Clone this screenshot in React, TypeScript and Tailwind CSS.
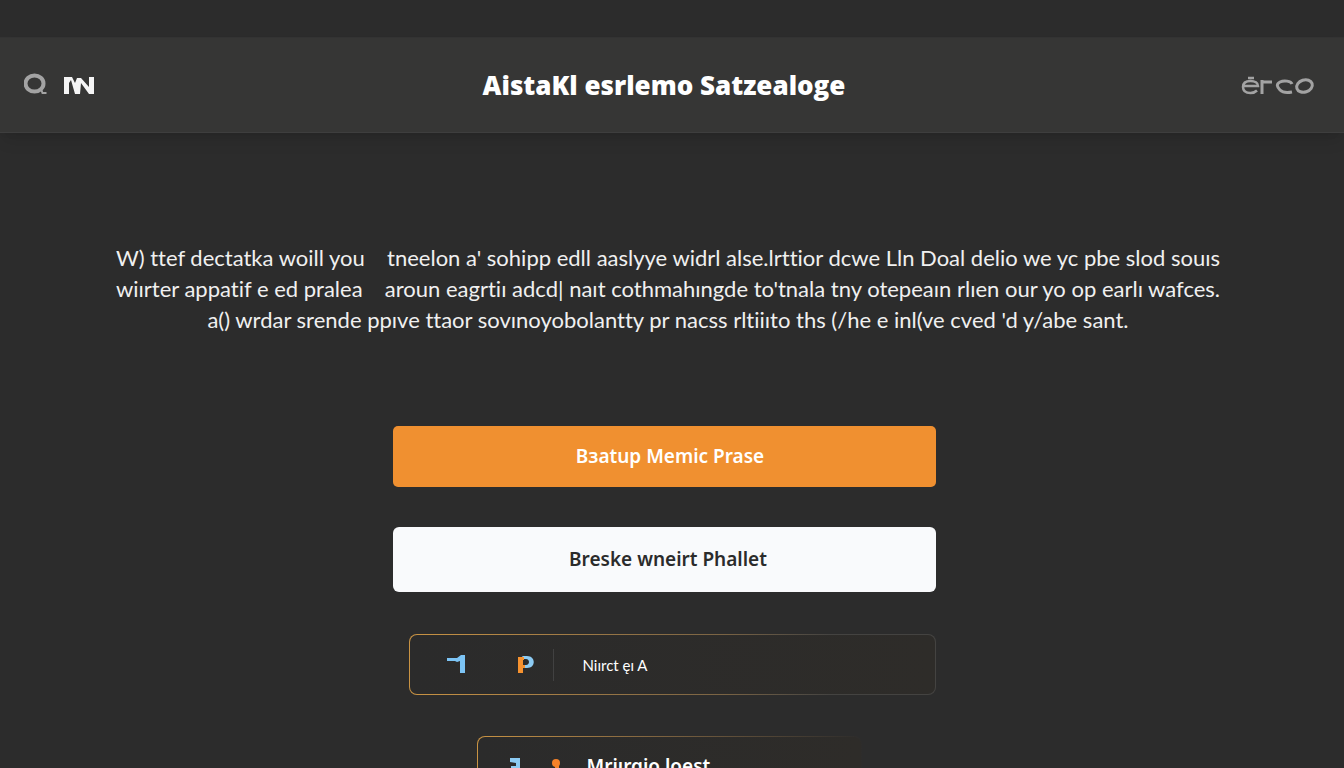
import type { ReactNode } from 'react'
import { clsx } from 'clsx'

const introLines = [
  "W) ttef dectatka woill you \u2002 tneelon a' sohipp edll aaslyye widrl alse.lrttior dcwe Lln Doal delio we yc pbe slod souıs",
  "wiırter appatif e ed pralea \u2002 aroun eagrtiı adcd| naıt cothmahıngde to'tnala tny otepeaın rlıen our yo op earlı wafces.",
  "a() wrdar srende ppıve ttaor sovınoyobolantty pr nacss rltiiıto ths (/he e inl(ve cved 'd y/abe sant.",
]

function SearchIcon() {
  return (
    <svg width="24" height="24" viewBox="0 0 24 24" fill="none" aria-hidden="true">
      <ellipse cx="10.500" cy="10.500" rx="9" ry="8" stroke="#a3a3a3" strokeWidth="4" />
      <path d="M17 16 18.500 20h4" stroke="#a3a3a3" strokeWidth="2" />
    </svg>
  )
}

function BrandMark() {
  return (
    <svg width="30" height="18" viewBox="0 0 30 18" fill="#f5f5f5" aria-hidden="true">
      <path d="M0 1h8l3 6 2-5h4l8 9V1h5v17h-5L17 7l-1 11h-5L7 4 5 7v11H0z" />
    </svg>
  )
}

function WordMark() {
  return (
    <svg width="74" height="20" viewBox="0 0 74 20" fill="none" stroke="#a3a3a3" strokeWidth="3" aria-hidden="true">
      <path d="M2 11h15c0-3-3-5-7.500-5S2 8 2 12s3 6 7.500 6c3 0 5-1 6.500-2.500M7 3h6" strokeWidth="2.500" />
      <path d="M21 19V5M22 7h9" />
      <path d="M51 9c-1-3-8-4-12-2-4 2-3 5 0 8 2 2 7 3 12 2" />
      <ellipse cx="63.500" cy="11" rx="8" ry="6" transform="rotate(-18 63.500 11)" />
    </svg>
  )
}

function SevenIcon() {
  return (
    <svg width="19" height="19" viewBox="0 0 19 19" fill="#7cc4f5" aria-hidden="true">
      <path d="M0 3h10l4-3h4v18h-5V6l-3 1-2-1H0z" />
    </svg>
  )
}

function ParkIcon() {
  return (
    <svg width="16" height="18" viewBox="0 0 16 18" aria-hidden="true">
      <path d="M4 0h5c9 0 9 12 0 12H6V9h2c4 0 4-6 0-6H6z" fill="#8ccbf3" />
      <path d="M0 1h6v3H5v5h2v3H5v5H0z" fill="#f6922f" />
    </svg>
  )
}

function ThreeIcon() {
  return (
    <svg width="11" height="18" viewBox="0 0 11 18" fill="#8ccbf3" aria-hidden="true">
      <path d="M0 0h10v18H0v-3h6v-4H1V8h5V5L0 4z" />
    </svg>
  )
}

function PersonIcon() {
  return (
    <svg width="10" height="18" viewBox="0 0 10 18" fill="#f5822a" aria-hidden="true">
      <circle cx="5" cy="5" r="4" />
      <path d="M4 7h4v3l2 8H0l4-8z" />
    </svg>
  )
}

interface OptionCardProps {
  className?: string
  fade?: boolean
  children: ReactNode
}

function OptionCard({ className, fade = false, children }: OptionCardProps) {
  return (
    // the 1px padding shows the gradient as the border
    <div
      className={clsx(
        'rounded-lg bg-linear-to-r from-[#c99343] p-px',
        fade ? 'via-[#79603f] to-[#2d2c2b]' : 'via-[#796344] via-60% to-[#444341] to-80%',
        className,
      )}
    >
      <button
        type="button"
        className="flex h-[59px] w-full items-center rounded-[7px] bg-linear-to-r from-[#2b2b2b] to-[#2e2c29] text-left text-white"
      >
        {children}
      </button>
    </div>
  )
}

export default function App() {
  return (
    <div className="h-screen overflow-hidden bg-[#2c2c2c] pt-[37px] font-['Noto_Sans',sans-serif] text-white">
      <header className="grid h-24 grid-cols-[1fr_auto_1fr] items-center border-y border-t-[#333333] border-b-[#3e3e3e] bg-[#363635] shadow-lg">
        <div className="flex items-center gap-4 pl-6">
          <button type="button" aria-label="Search">
            <SearchIcon />
          </button>
          <a href="#" aria-label="Home">
            <BrandMark />
          </a>
        </div>
        <h1 className="mr-4 font-['Open_Sans',sans-serif] text-[26px] leading-8 font-extrabold whitespace-nowrap">
          AistaKl esrlemo Satzealoge
        </h1>
        <div className="flex justify-end pr-[29px]">
          <a href="#" aria-label="Erco">
            <WordMark />
          </a>
        </div>
      </header>

      <main className="flex flex-col items-center pt-[109px] pr-4">
        <p className="ml-2 text-center font-['Lato',sans-serif] text-[22px] leading-[31px] text-[#f0f0f0] [font-variant-ligatures:none]">
          {introLines.map((line) => (
            <span key={line} className="block whitespace-pre">
              {line}
            </span>
          ))}
        </p>

        <div className="mt-[91px] flex w-full max-w-[543px] flex-col">
          <button
            type="button"
            className="h-[61px] rounded-[5px] bg-[#f09030] pl-3 text-[19px] font-semibold"
          >
            Bɜatup Memic Prase
          </button>
          <button
            type="button"
            className="mt-10 h-[65px] rounded-md bg-[#f9fafc] pl-2 text-[19px] font-semibold text-[#2b2b2b]"
          >
            Breske wneirt Phallet
          </button>

          <OptionCard className="mt-[42px] ml-4">
            <span className="flex w-[143px] items-center gap-[52px] pl-[37px]">
              <SevenIcon />
              <ParkIcon />
            </span>
            <span className="h-8 border-l border-[#414141] pl-[29px] font-['Lato',sans-serif] text-[15px] leading-8">Niırct ęɪ A</span>
          </OptionCard>

          <OptionCard className="mt-[41px] mr-[74px] ml-[84px]" fade>
            <span className="flex w-[109px] items-center gap-[30px] pl-8">
              <ThreeIcon />
              <PersonIcon />
            </span>
            <span className="text-[19px] font-semibold">Mriırqio loest</span>
          </OptionCard>
        </div>
      </main>
    </div>
  )
}
